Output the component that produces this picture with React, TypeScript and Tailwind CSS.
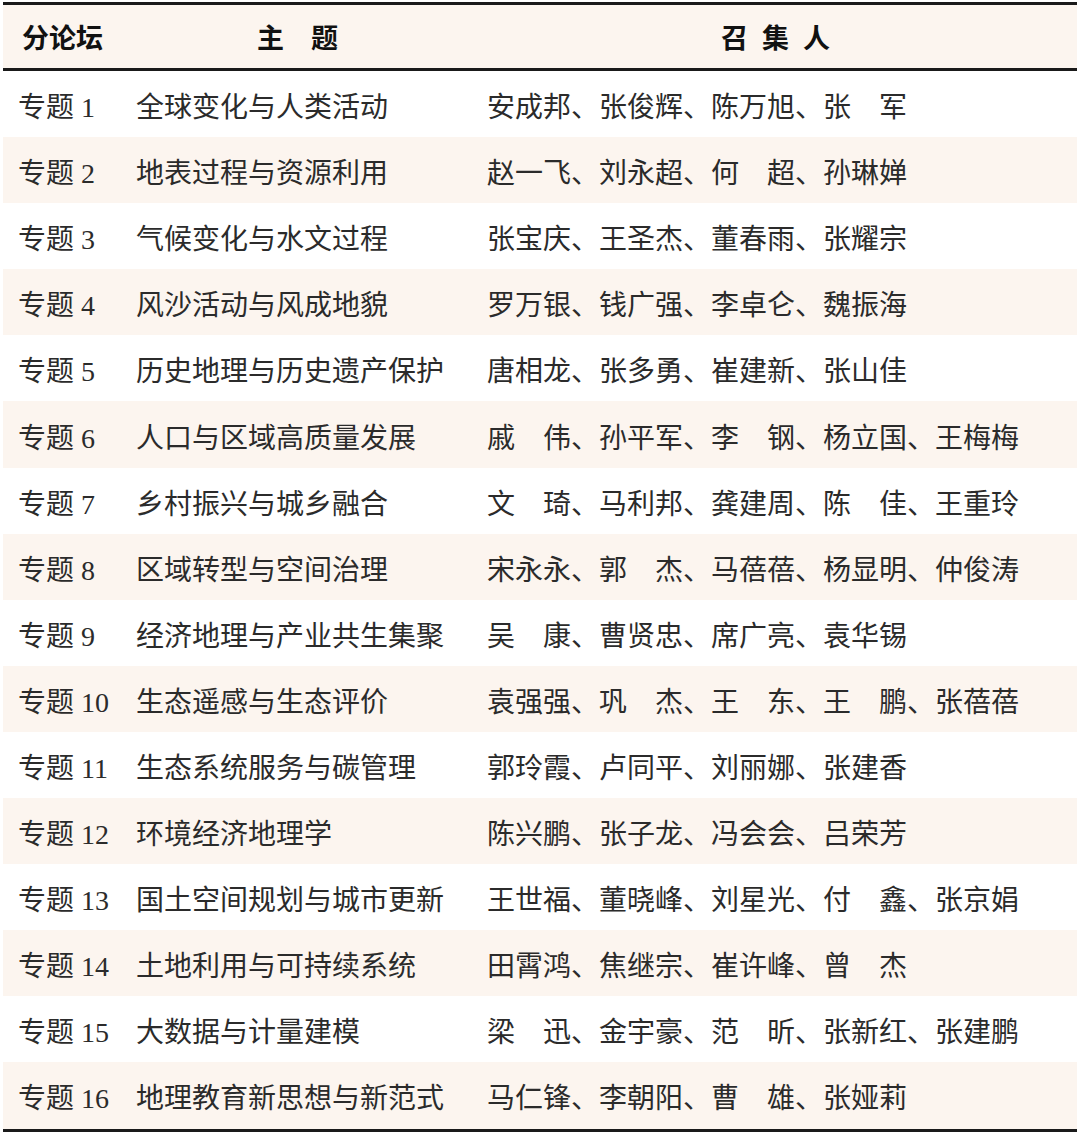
const rows: [string, string, string][] = [
  ['专题 1', '全球变化与人类活动', '安成邦、张俊辉、陈万旭、张　军'],
  ['专题 2', '地表过程与资源利用', '赵一飞、刘永超、何　超、孙琳婵'],
  ['专题 3', '气候变化与水文过程', '张宝庆、王圣杰、董春雨、张耀宗'],
  ['专题 4', '风沙活动与风成地貌', '罗万银、钱广强、李卓仑、魏振海'],
  ['专题 5', '历史地理与历史遗产保护', '唐相龙、张多勇、崔建新、张山佳'],
  ['专题 6', '人口与区域高质量发展', '戚　伟、孙平军、李　钢、杨立国、王梅梅'],
  ['专题 7', '乡村振兴与城乡融合', '文　琦、马利邦、龚建周、陈　佳、王重玲'],
  ['专题 8', '区域转型与空间治理', '宋永永、郭　杰、马蓓蓓、杨显明、仲俊涛'],
  ['专题 9', '经济地理与产业共生集聚', '吴　康、曹贤忠、席广亮、袁华锡'],
  ['专题 10', '生态遥感与生态评价', '袁强强、巩　杰、王　东、王　鹏、张蓓蓓'],
  ['专题 11', '生态系统服务与碳管理', '郭玲霞、卢同平、刘丽娜、张建香'],
  ['专题 12', '环境经济地理学', '陈兴鹏、张子龙、冯会会、吕荣芳'],
  ['专题 13', '国土空间规划与城市更新', '王世福、董晓峰、刘星光、付　鑫、张京娟'],
  ['专题 14', '土地利用与可持续系统', '田霄鸿、焦继宗、崔许峰、曾　杰'],
  ['专题 15', '大数据与计量建模', '梁　迅、金宇豪、范　昕、张新红、张建鹏'],
  ['专题 16', '地理教育新思想与新范式', '马仁锋、李朝阳、曹　雄、张娅莉'],
];

export default function App() {
  return (
    <div className="w-[1080px] h-[1137px] bg-white pt-[2px] px-[3px]">
      <div className="border-t-[3px] border-b-[3px] border-[#1a1a1a]">
        <div
          className="grid grid-cols-[133px_351px_1fr] h-[66px] items-center pt-[2px] bg-[#fcf5ef] border-b-[3px] border-[#1a1a1a] text-[27px] font-bold text-[#111]"
          style={{ fontFamily: '"Noto Sans CJK SC", sans-serif' }}
        >
          <div className="pl-[19px]">分论坛</div>
          <div className="pl-[121px]">主　题</div>
          <div className="pl-[234px] tracking-[14px]">召集人</div>
        </div>
        {rows.map(([id, topic, names], i) => (
          <div
            key={id}
            className={`grid grid-cols-[133px_351px_1fr] h-[66.1px] items-center pt-[8px] text-[28px] text-[#2b2b2b] ${
              i % 2 === 1 ? 'bg-[#fcf5ef]' : 'bg-white'
            }`}
            style={{ fontFamily: '"Liberation Serif", "Noto Sans CJK SC", serif' }}
          >
            <div className="pl-[15px] whitespace-nowrap">{id}</div>
            <div className="whitespace-nowrap">{topic}</div>
            <div className="whitespace-nowrap">{names}</div>
          </div>
        ))}
      </div>
    </div>
  );
}
